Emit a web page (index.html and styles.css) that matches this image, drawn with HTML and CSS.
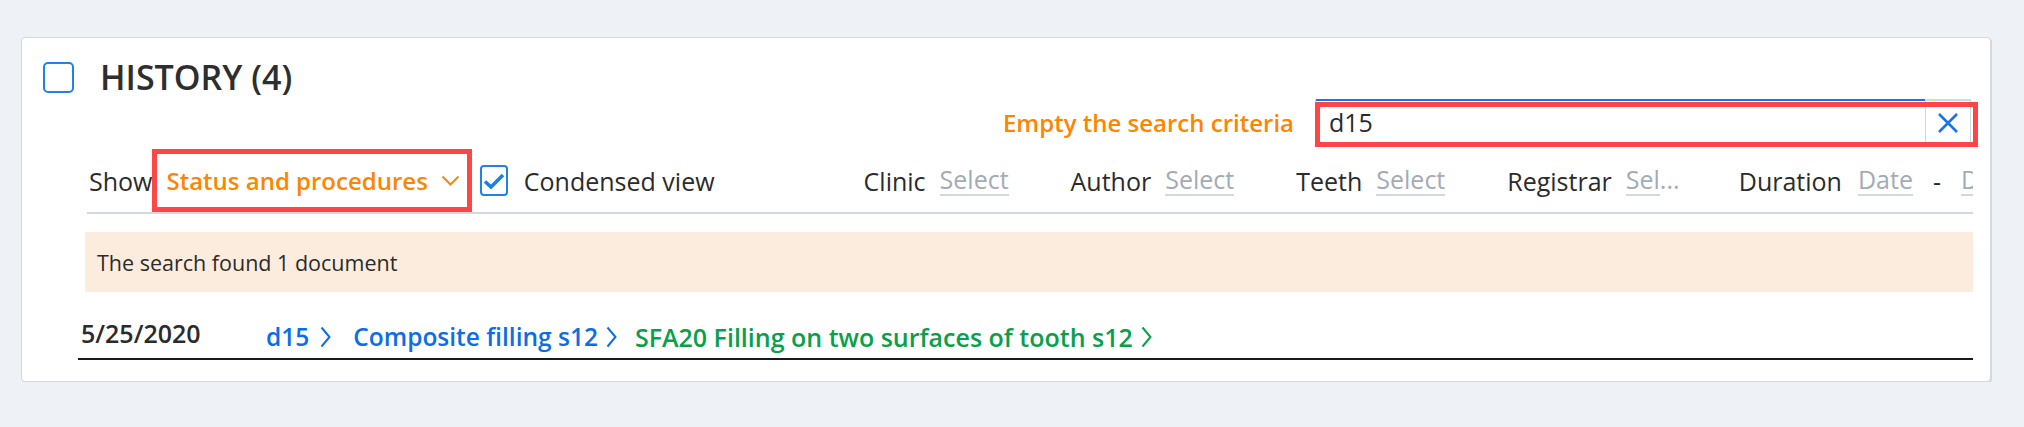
FILE: index.html
```html
<!DOCTYPE html>
<html lang="en">
<head>
    <meta charset="UTF-8">
    <title>History</title>
    <link rel="stylesheet" href="styles.css">
</head>
<body>
    <div class="card">
        <div class="card-head">
            <span class="box"></span>
            <h1>HISTORY (4)</h1>
        </div>

        <div class="search-line">
            <span class="clear-link">Empty the search criteria</span>
            <div class="search">
                <div class="search-field">d15</div>
                <div class="search-btn">
                    <svg width="22" height="20" viewBox="0 0 22 20"><path d="M2 1l18 18M20 1L2 19" stroke="#1a73e8" stroke-width="2.6" fill="none"/></svg>
                </div>
            </div>
        </div>

        <div class="filters">
            <span class="lbl">Show</span>
            <div class="show-pick">
                <span>Status and procedures</span>
                <svg width="19" height="11" viewBox="0 0 19 11"><path d="M1.5 1.5l8 8 8-8" stroke="#ff8500" stroke-width="2" fill="none"/></svg>
            </div>
            <span class="check">
                <svg width="24" height="20" viewBox="0 0 24 20"><path d="M3 10.5l6 5.5L21 4" stroke="#1a7fe6" stroke-width="3.6" fill="none"/></svg>
            </span>
            <span class="lbl">Condensed view</span>

            <div class="filter first">
                <span class="lbl">Clinic</span>
                <span class="sel">Select</span>
            </div>
            <div class="filter">
                <span class="lbl">Author</span>
                <span class="sel">Select</span>
            </div>
            <div class="filter">
                <span class="lbl">Teeth</span>
                <span class="sel">Select</span>
            </div>
            <div class="filter">
                <span class="lbl">Registrar</span>
                <span class="sel short">Sel...</span>
            </div>
            <div class="filter wide">
                <span class="lbl">Duration</span>
                <span class="sel">Date</span>
                <span class="dash">-</span>
                <span class="sel">Date</span>
            </div>
        </div>

        <div class="notice">The search found 1 document</div>

        <div class="entry">
            <span class="date">5/25/2020</span>
            <a class="crumb first">d15
                <svg width="11" height="22" viewBox="0 0 11 22"><path d="M1.5 1.5l8 9.5-8 9.5" stroke="#0d6de6" stroke-width="2" fill="none"/></svg>
            </a>
            <a class="crumb">Composite filling s12
                <svg width="11" height="22" viewBox="0 0 11 22"><path d="M1.5 1.5l8 9.5-8 9.5" stroke="#0d6de6" stroke-width="2" fill="none"/></svg>
            </a>
            <a class="crumb done">SFA20 Filling on two surfaces of tooth s12
                <svg width="11" height="22" viewBox="0 0 11 22"><path d="M1.5 1.5l8 9.5-8 9.5" stroke="#08a04a" stroke-width="2" fill="none"/></svg>
            </a>
        </div>
    </div>
</body>
</html>
```

FILE: styles.css
```css
body {
    margin: 0;
    padding: 37px 0 0 21px;
    background-color: #eef1f6;
    font-family: "Open Sans", "Noto Sans", sans-serif;
    color: #2b2b2b;
}
.card {
    width: 1970px;
    box-sizing: border-box;
    background-color: #fff;
    border: 1px solid #d3d8de;
    border-radius: 4px;
    box-shadow: 1px 1px 0 #d3d8de;
    padding-bottom: 21px;
}
.card-head {
    display: flex;
    align-items: center;
    gap: 26px;
    padding: 24px 0 0 21px;
}
.box {
    width: 31px;
    height: 31px;
    box-sizing: border-box;
    border: 2px solid #1f82e6;
    border-radius: 5px;
}
.card-head h1 {
    margin: 0;
    font-size: 34px;
    font-weight: 600;
    line-height: 31px;
    color: #2e2e2e;
}

/* search */
.search-line {
    display: flex;
    justify-content: flex-end;
    align-items: center;
    gap: 21px;
    margin-top: 6px;
    padding-right: 19px;
}
.clear-link {
    color: #ff8500;
    font-weight: 600;
    font-size: 24px;
}
.search {
    position: relative;
    display: flex;
    width: 656px;
    height: 46px;
    box-sizing: border-box;
    border: 1px solid #d3d8de;
    border-top: none;
}
.search::after {
    content: "";
    position: absolute;
    left: -1px;
    right: -8px;
    top: 3px;
    bottom: -3px;
    border: 5px solid #ff4545;
}
.search-field {
    flex: 1;
    border-top: 2px solid #1a73e8;
    padding-left: 13px;
    font-size: 25px;
    line-height: 42px;
}
.search-btn {
    width: 44px;
    display: flex;
    align-items: center;
    justify-content: center;
    border-top: 2px solid #d3d8de;
    border-left: 1px solid #d3d8de;
}

/* filter row */
.filters {
    display: flex;
    align-items: center;
    height: 63px;
    margin: 4px 17px 0 65px;
    padding-left: 2px;
    border-bottom: 2px solid #d3d8de;
    overflow: hidden;
    white-space: nowrap;
    font-size: 25px;
}
.show-pick {
    display: flex;
    align-items: center;
    gap: 13px;
    height: 63px;
    box-sizing: border-box;
    border: 5px solid #ff4545;
    padding: 0 7px 0 9px;
    color: #ff8500;
    font-weight: 600;
    font-size: 24px;
}
.check {
    width: 31px;
    height: 31px;
    box-sizing: border-box;
    border: 2px solid #1f82e6;
    border-radius: 4px;
    display: flex;
    align-items: center;
    justify-content: center;
    margin: 0 16px 0 8px;
}
.filter {
    display: flex;
    align-items: center;
    gap: 14px;
    margin-left: 62px;
}
.filter.first {
    margin-left: 149px;
}
.filter.wide {
    margin-left: 79px;
    gap: 16px;
}
.sel {
    color: #a3abb5;
    line-height: 29px;
    border-bottom: 2px solid #d3d8de;
}
.sel.short {
    width: 34px;
}
.dash {
    margin: 0 4px;
}

/* results */
.notice {
    display: flex;
    align-items: center;
    height: 60px;
    margin: 18px 17px 0 63px;
    padding-left: 12px;
    background-color: #fcecdd;
    font-size: 21.5px;
}
.entry {
    display: flex;
    align-items: flex-end;
    height: 61px;
    margin: 0 17px 0 56px;
    padding-bottom: 5px;
    border-bottom: 2px solid #1a1a1a;
    font-size: 24.5px;
    font-weight: 600;
    line-height: 32px;
    white-space: nowrap;
}
.date {
    width: 188px;
    box-sizing: border-box;
    padding-left: 3px;
    margin-bottom: 4px;
    font-size: 25px;
}
.crumb {
    display: flex;
    align-items: center;
    gap: 8px;
    margin-right: 16px;
    color: #0d6de6;
}
.crumb.first {
    gap: 11px;
    margin-right: 22px;
}
.crumb.done {
    margin-left: 2px;
    color: #08a04a;
    font-size: 25px;
}
```
